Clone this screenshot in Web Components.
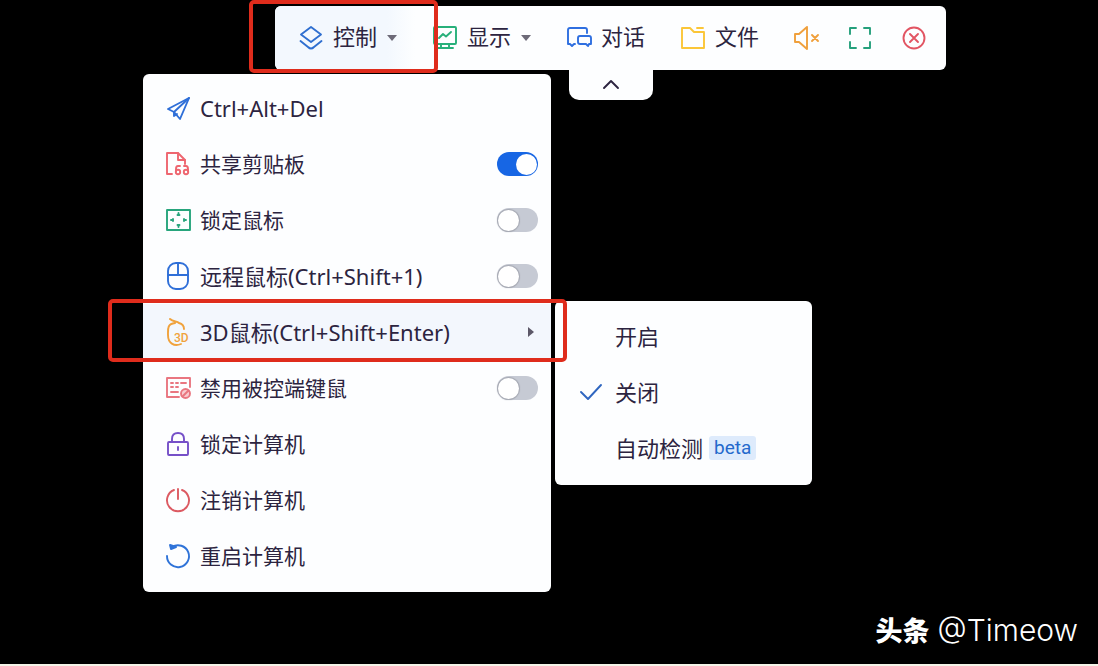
<!DOCTYPE html>
<html lang="zh-CN">
<head>
<meta charset="utf-8">
<title>远程控制</title>
<style>
body { margin: 0; background: #000; }
</style>
</head>
<body>
<remote-screen>
  <tool-bar>
    <tool-item icon="layers" caret active>控制</tool-item>
    <tool-item icon="monitor" caret>显示</tool-item>
    <tool-item icon="chat">对话</tool-item>
    <tool-item icon="folder">文件</tool-item>
    <tool-item slot="tools" icon="mute" label="静音"></tool-item>
    <tool-item slot="tools" icon="expand" label="全屏"></tool-item>
    <tool-item slot="tools" icon="close" label="关闭"></tool-item>
    <menu-panel slot="menu">
      <menu-row icon="send" keys>Ctrl+Alt+Del</menu-row>
      <menu-row icon="clipboard" kind="toggle" checked>共享剪贴板</menu-row>
      <menu-row icon="lockmouse" kind="toggle">锁定鼠标</menu-row>
      <menu-row icon="mouse" kind="toggle" keys>远程鼠标(Ctrl+Shift+1)</menu-row>
      <menu-row icon="mouse3d" kind="submenu" keys>3D鼠标(Ctrl+Shift+Enter)<mode-menu slot="submenu"></mode-menu></menu-row>
      <menu-row icon="keyboard" kind="toggle">禁用被控端键鼠</menu-row>
      <menu-row icon="lock">锁定计算机</menu-row>
      <menu-row icon="power">注销计算机</menu-row>
      <menu-row icon="restart">重启计算机</menu-row>
    </menu-panel>
  </tool-bar>
  <water-mark slot="footer"></water-mark>
</remote-screen>

<script>
const icons = {
  layers: ['#2f6fd0', '<path d="M12 1 22 8.500 12 16 2 8.500Z"/><path d="M1.500 15 9 21Q12 24 15 21L22.500 15"/>'],
  monitor: ['#27b07a', '<rect x="1" y="1" width="22" height="17" rx="1"/><path d="M6 12 10 8 13 10.500 18 6M8 18v3M16 18v3M4 22h16"/>'],
  chat: ['#2f6fe0', '<path d="M20 7V4Q20 2 18 2H3Q1 2 1 4V18H3L5 20L7 18H8"/><path d="M13 10H22Q24 10 24 12V18H22L21 20L19 18H13Q11 18 11 16V12Q11 10 13 10Z"/>'],
  folder: ['#fbc638', '<path d="M1 22V2H9L13 6H23V22Z"/><path d="M16 2H22"/>'],
  mute: ['#f0a03c', '<path d="M1 8H5L13 1V23L5 16H1Z"/><path d="M18 9 24 15M24 9 18 15"/>'],
  expand: ['#25a07c', '<path d="M2 8V2H8M16 2H22V8M22 16V22H16M8 22H2V16"/>'],
  close: ['#e25563', '<circle cx="12" cy="12" r="10.500"/><path d="M8 8 16 16M16 8 8 16"/>'],
  send: ['#2f6fd8', '<path d="M23 2 2 13 8 16 14 23Z"/><path d="M23 2 8 16V20L11 18"/>'],
  clipboard: ['#ee6670', '<path d="M6 22H1V1H12L19 8V12"/><path d="M12 1V8H19"/><path d="M14 14H12Q10 14 10 17V19"/><circle cx="12" cy="20" r="2.200"/><path d="M18 14H20Q22 14 22 17V19"/><circle cx="20" cy="20" r="2.200"/>'],
  lockmouse: ['#27a57c', '<rect x="1" y="2" width="23" height="20"/><path d="M12.500 5V7M12.500 17V19M5 12H7M18 12H20M11.500 7H13.500M11.500 17H13.500M7 11V13M18 11V13"/>'],
  mouse: ['#2f6fd8', '<rect x="2" y="-1" width="20" height="26" rx="8"/><path d="M2 11H22M12 -1V11"/>'],
  mouse3d: ['#f0a23c', '<path d="M4 -1C7 2 11 1 13 3C17 4 18 6 18 9M9 3C1 4 2 9 2 15C2 23 8 27 15 24"/><text x="8" y="22" font-family="Roboto, sans-serif" font-size="12" font-weight="500" fill="currentColor" stroke="none">3D</text>'],
  keyboard: ['#e97680', '<path d="M13 21H1V2H24V11M5 7H7M10 7H12M15 7H20M5 11H7M10 11H12M5 16H12"/><circle cx="19.500" cy="17.500" r="4.500" fill="#f8ccd0"/><path d="M16.500 20.500 22.500 14.500"/>'],
  lock: ['#7650c8', '<rect x="2" y="10" width="20" height="13" rx="1"/><path d="M6 10V7Q6 1 12 1T18 7V10M12 15V18"/>'],
  power: ['#dc5a62', '<path d="M8 2A11 11 0 1 0 16 2M12 1V11"/>'],
  restart: ['#2f73d8', '<path d="M6 3A11 11 0 1 1 1 12"/><path d="M4 1 5 5 10 3Z" fill="currentColor"/>'],
  check: ['#2f66c0', '<path d="M2 12 9 19 22 5"/>'],
  up: ['#2c2440', '<path d="M5 15 12 8 19 15"/>']
};

function define(name, render) {
  customElements.define(name, class extends HTMLElement {
    constructor() { super(); this.attachShadow({ mode: 'open' }); }
    connectedCallback() { this.shadowRoot.innerHTML = render(this); }
  });
}

define('ui-icon', el => {
  const [color, shape] = icons[el.getAttribute('name')];
  return `<style>
    :host { display: block; flex: none; width: 24px; height: 24px; color: ${color}; }
    svg { display: block; width: 100%; height: 100%; overflow: visible; }
  </style>
  <svg viewBox="0 0 24 24" fill="none" stroke="currentColor" stroke-width="1.900" stroke-linecap="round" stroke-linejoin="round" aria-hidden="true">${shape}</svg>`;
});

define('remote-screen', () => `<style>
    :host {
      display: flex; flex-direction: column; box-sizing: border-box; min-height: 100vh;
      padding-top: 6px; border-bottom: 2px solid #f4f4e8; background: #000; color: #2c2440;
      font: 22px/32px "Noto Sans", "Noto Sans CJK SC", sans-serif;
    }
    main { padding: 0 152px 0 275px; }
    footer { margin-top: auto; }
  </style>
  <main><slot></slot></main>
  <footer><slot name="footer"></slot></footer>`);

define('tool-bar', () => `<style>
    :host { display: flex; flex-direction: column; align-items: center; position: relative; }
    nav { display: flex; align-self: stretch; box-sizing: border-box; height: 64px; border-radius: 6px; background: #fdfeff; padding-right: 19px; }
    .tools { display: flex; gap: 28px; margin-left: auto; }
    .fold { display: grid; place-items: center; width: 84px; height: 30px; padding: 0; border: 0; border-radius: 0 0 10px 10px; background: #fdfeff; }
    .menu { position: absolute; top: 68px; left: -132px; }
    .mark { position: absolute; top: -6px; left: -26px; box-sizing: border-box; width: 189px; height: 73px; border: 4px solid #df2c1c; border-radius: 5px; pointer-events: none; }
  </style>
  <nav aria-label="工具栏"><slot></slot><div class="tools"><slot name="tools"></slot></div></nav>
  <button class="fold" aria-label="收起"><ui-icon name="up"></ui-icon></button>
  <div class="menu"><slot name="menu"></slot></div>
  <div class="mark"></div>`);

define('tool-item', el => `<style>
    :host { display: flex; }
    button { display: flex; align-items: center; gap: 10px; padding: 0 18px; border: 0; background: none; color: inherit; font: inherit; white-space: nowrap; }
    :host([active]) button { padding-left: 24px; border-radius: 6px 0 0 6px; background: linear-gradient(90deg, #f3f8fe 80%, #fdfeff); }
    :host([label]) button { padding: 0 1px; }
    .text { padding-bottom: 4px; }
    .caret { width: 10px; height: 6px; background: #6d6a78; clip-path: polygon(0 0, 100% 0, 50% 100%); }
  </style>
  <button ${el.hasAttribute('label') ? `aria-label="${el.getAttribute('label')}"` : ''}>
    <ui-icon name="${el.getAttribute('icon')}"></ui-icon>
    ${el.hasAttribute('label') ? '' : '<span class="text"><slot></slot></span>'}
    ${el.hasAttribute('caret') ? '<span class="caret"></span>' : ''}
  </button>`);

define('menu-panel', () => `<style>
    :host { display: block; box-sizing: border-box; width: 408px; padding: 6px 0 8px; border-radius: 6px; background: #fdfeff; }
  </style><slot></slot>`);

define('menu-row', el => {
  const kind = el.getAttribute('kind');
  const tag = kind === 'toggle' ? 'label' : 'button';
  const end = kind === 'toggle'
    ? `<input type="checkbox" role="switch" ${el.hasAttribute('checked') ? 'checked' : ''}>`
    : kind === 'submenu' ? '<i class="arrow"></i>' : '';
  return `<style>
    :host { display: block; position: relative; }
    :host([kind="submenu"]) { background: #f3f7fd; }
    .row { display: flex; align-items: center; gap: 10px; box-sizing: border-box; width: 100%; height: 56px; padding: 0 13px 0 23px; border: 0; background: none; color: inherit; font: inherit; font-size: 21px; text-align: left; white-space: nowrap; }
    :host([keys]) .row { font-size: 22px; }
    .text { flex: 1; }
    input { appearance: none; display: flex; align-items: center; box-sizing: border-box; width: 41px; height: 24px; margin: 0; padding: 0 1px; border-radius: 12px; background: #c6cad4; }
    input::before { content: ""; width: 21px; height: 21px; border-radius: 50%; background: #fff; box-shadow: 0 0 1px 1px #a5a8b2; }
    input:checked { justify-content: flex-end; background: #1766e4; }
    input:checked::before { box-shadow: none; }
    .arrow { width: 6px; height: 10px; margin-right: 4px; background: #5c5868; clip-path: polygon(0 0, 100% 50%, 0 100%); }
    .submenu { position: absolute; top: -3px; left: 100%; padding-left: 4px; }
    .mark { position: absolute; inset: -5px -16px -2px -35px; border: 4px solid #df2c1c; border-radius: 5px; pointer-events: none; }
  </style>
  <${tag} class="row">
    <ui-icon name="${el.getAttribute('icon')}"></ui-icon>
    <span class="text"><slot></slot></span>${end}
  </${tag}>
  ${kind === 'submenu' ? '<div class="submenu"><slot name="submenu"></slot></div><div class="mark"></div>' : ''}`;
});

define('mode-menu', () => `<style>
    :host { display: block; box-sizing: border-box; width: 257px; padding: 7px 0 9px; border-radius: 6px; background: #fdfeff; }
    label { display: flex; align-items: center; gap: 12px; height: 56px; padding-left: 24px; white-space: nowrap; font-size: 22px; }
    input { position: absolute; opacity: 0; margin: 0; }
    ui-icon { visibility: hidden; }
    input:checked + ui-icon { visibility: visible; }
    .beta { padding: 0 5px; margin-left: -6px; border-radius: 3px; background: #deebfc; color: #2469cc; font: 19px/24px Roboto, sans-serif; }
  </style>
  <label><input type="radio" name="mode"><ui-icon name="check"></ui-icon><span>开启</span></label>
  <label><input type="radio" name="mode" checked><ui-icon name="check"></ui-icon><span>关闭</span></label>
  <label><input type="radio" name="mode"><ui-icon name="check"></ui-icon><span>自动检测</span><span class="beta">beta</span></label>`);

define('water-mark', () => `<style>
    :host { display: flex; justify-content: flex-end; align-items: center; gap: 8px; padding: 0 20px 14px 0; color: #fff; font: 300 30px/40px Inter, "Liberation Sans", sans-serif; }
    b { font: 900 27px/40px "Noto Sans CJK SC", sans-serif; }
  </style><b>头条</b><span>@Timeow</span>`);
</script>
</body>
</html>
